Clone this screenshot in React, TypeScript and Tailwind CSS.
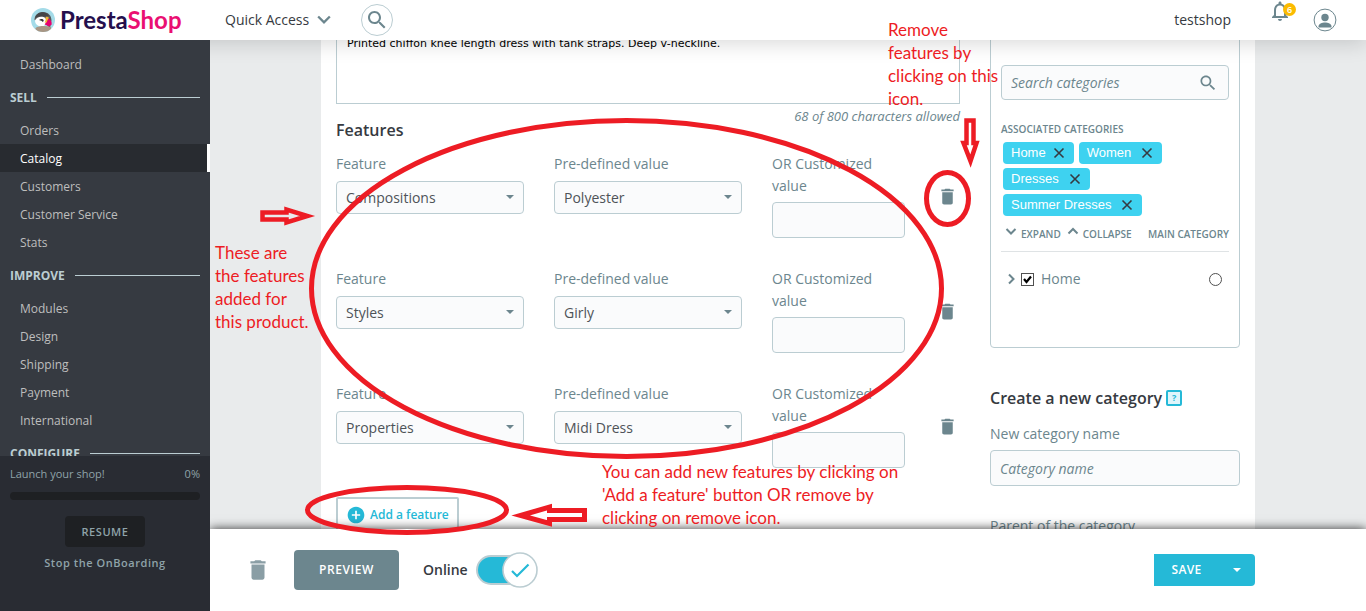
import { useState } from 'react'
import type { ReactNode } from 'react'

type MenuGroup = { title?: string; items: string[] }

const menu: MenuGroup[] = [
  { items: ['Dashboard'] },
  { title: 'Sell', items: ['Orders', 'Catalog', 'Customers', 'Customer Service', 'Stats'] },
  { title: 'Improve', items: ['Modules', 'Design', 'Shipping', 'Payment', 'International'] },
  { title: 'Configure', items: [] },
]

const initialFeatures = [
  { id: 1, feature: 'Compositions', value: 'Polyester', custom: '' },
  { id: 2, feature: 'Styles', value: 'Girly', custom: '' },
  { id: 3, feature: 'Properties', value: 'Midi Dress', custom: '' },
]

const featureNames = ['Compositions', 'Styles', 'Properties']
const featureValues = ['Polyester', 'Girly', 'Midi Dress']
const initialTags = ['Home', 'Women', 'Dresses', 'Summer Dresses']

const fieldClass = 'border border-[#bbcdd2] rounded bg-[#fafbfc] text-sm focus:outline-none focus:border-[#25b9d7]'

function TrashIcon({ className }: { className: string }) {
  return (
    <svg viewBox="0 0 24 24" fill="currentColor" className={className}>
      <path d="M6 19c0 1.1.9 2 2 2h8c1.1 0 2-.9 2-2V7H6v12zM19 4h-3.5l-1-1h-5l-1 1H5v2h14V4z" />
    </svg>
  )
}

function SearchIcon({ className }: { className: string }) {
  return (
    <svg viewBox="0 0 24 24" fill="currentColor" className={className}>
      <path d="M15.5 14h-.79l-.28-.27C15.41 12.59 16 11.11 16 9.5 16 5.91 13.09 3 9.5 3S3 5.91 3 9.5 5.91 16 9.5 16c1.61 0 3.09-.59 4.23-1.57l.27.28v.79l5 4.99L20.49 19l-4.99-5zm-6 0C7.01 14 5 11.99 5 9.5S7.01 5 9.5 5 14 7.01 14 9.5 11.99 14 9.5 14z" />
    </svg>
  )
}

function Chevron({ d, className }: { d: string; className: string }) {
  return (
    <svg viewBox="0 0 12 12" fill="none" stroke="currentColor" strokeWidth="2" className={className}>
      <path d={d} />
    </svg>
  )
}

function Logo() {
  return (
    <a href="#home" className="flex items-center gap-[5px] ml-[31px] w-[194px] shrink-0">
      <svg viewBox="0 0 24 24" className="size-6">
        <defs>
          <clipPath id="puffin">
            <circle cx="12" cy="12" r="12" />
          </clipPath>
        </defs>
        <g clipPath="url(#puffin)">
          <rect width="24" height="24" fill="#a4dbe8" />
          <path d="M3.500 12C3.500 7 7 4 12 4s8.500 3.500 8.500 8.500L19 20l-3-3z" fill="#58585a" />
          <path d="M4 10C6 3.500 14 2 18 7.500l-3.500 1.200C11 7.700 7.500 8 4 10z" fill="#454547" />
          <path d="M4 12.500c1-3 4.300-4.200 7.300-3.800 3 .4 4.700 2.600 4.200 5.300-.5 2.600-2.400 4.500-5 4.500-3.600 0-6.500-2.500-6.500-6z" fill="#fff" />
          <path d="M4.500 20C8 17.500 15 17.500 20 19v5H4.500z" fill="#a89684" />
          <path d="M17 10.500c2.500.8 4 3 3.700 6L18 18.500l-4.500-2.200c2-1.500 3-3.300 3.500-5.800z" fill="#e6006f" />
          <path d="M14.500 9c1.500-.6 2.700-.2 3.400.8l-2.600 5-1.800-.3c1.200-1.800 1.500-3.500 1-5.500z" fill="#f6b133" />
          <path d="M8 12c1.800-1.400 3.800-1.200 4.800.3l-.8 1.800c-1-1-2-1.600-4-2.100z" fill="#333" />
        </g>
      </svg>
      <span className="font-['Lato'] text-2xl leading-6 font-bold text-[#250f4d]">
        Presta<span className="text-[#ea0f72]">Shop</span>
      </span>
    </a>
  )
}

function Header() {
  return (
    <header className="relative z-20 flex h-10 shrink-0 items-center bg-white text-sm text-[#363a41] shadow-[0_4px_20px_rgba(0,0,0,0.15)]">
      <Logo />
      <button type="button" className="flex items-center gap-2">
        Quick Access
        <Chevron d="M1 3l5 5 5-5" className="size-3.5 text-[#6c868e]" />
      </button>
      <button type="button" aria-label="Search" className="ml-[30px] flex size-8 items-center justify-center rounded-full border border-[#bbcdd2] text-[#6c868e]">
        <SearchIcon className="size-6" />
      </button>
      <a href="#shop" className="ml-auto">testshop</a>
      <button type="button" aria-label="Notifications" className="relative ml-[37px] mb-[18px] text-[#6c868e]">
        <svg viewBox="0 0 24 24" fill="currentColor" className="size-6">
          <path d="M12 22c1.100 0 2-.9 2-2h-4c0 1.100.9 2 2 2zm6-6v-5c0-3.070-1.630-5.640-4.500-6.320V4c0-.83-.67-1.500-1.500-1.500s-1.500.67-1.500 1.500v.68C7.640 5.360 6 7.920 6 11v5l-2 2v1h16v-1l-2-2zm-2 1H8v-6c0-2.480 1.510-4.500 4-4.500s4 2.020 4 4.500v6z" />
        </svg>
        <span className="absolute left-[15px] top-1 flex size-[13px] items-center justify-center rounded-full bg-[#fbbb00] text-[9px] leading-3 font-semibold text-white">6</span>
      </button>
      <button type="button" aria-label="Account" className="ml-[21px] mr-[29px] text-[#6c868e]">
        <svg viewBox="0 0 24 24" fill="none" className="size-6">
          <circle cx="12" cy="12" r="10.900" stroke="currentColor" />
          <circle cx="12" cy="9.500" r="3.700" fill="currentColor" />
          <path d="M5.500 18.500c0-2.800 3.500-4 6.500-4s6.500 1.200 6.500 4v1h-13z" fill="currentColor" />
        </svg>
      </button>
    </header>
  )
}

function Sidebar() {
  const active = 'Catalog'
  return (
    <aside className="relative z-20 flex w-[210px] shrink-0 flex-col bg-[#363a41] text-xs">
      <nav className="min-h-0 flex-1 overflow-hidden pt-2.5">
        {menu.map(group => (
          <div key={group.title ?? 'top'}>
            {group.title && (
              <h3 className="flex h-[38px] items-center gap-2.5 px-2.5 font-bold uppercase text-[#bbcdd2]">
                <span className="pt-px">{group.title}</span>
                <span className="h-px flex-1 bg-[#bbcdd2]" />
              </h3>
            )}
            {group.items.map(item => (
              <a
                key={item}
                href={`#${item}`}
                className={`flex h-7 items-center px-5 pt-0.5 ${
                  item === active ? 'bg-[#282b30] text-white border-r-3 border-white' : 'text-[#bebebe] hover:text-white'
                }`}
              >
                {item}
              </a>
            ))}
          </div>
        ))}
      </nav>
      <div className="flex h-[155px] shrink-0 flex-col items-center bg-[#292c33] px-2.5 pt-2.5 text-[11px] leading-4 text-[#8fa3a9]">
        <div className="flex w-full justify-between">
          <span>Launch your shop!</span>
          <span>0%</span>
        </div>
        <div className="mt-2.5 h-2 w-full rounded-full bg-[#1e2023]" />
        <button type="button" className="mt-4 h-[31px] w-20 rounded-sm bg-[#1e2023] font-semibold tracking-wider uppercase">
          Resume
        </button>
        <button type="button" className="mt-2 font-semibold tracking-wider">Stop the OnBoarding</button>
      </div>
    </aside>
  )
}

type SelectProps = { label: string; value: string; options: string[]; onChange: (value: string) => void }

function SelectField({ label, value, options, onChange }: SelectProps) {
  return (
    <label className="flex flex-col gap-1.5">
      {label}
      <span className="relative">
        <select
          value={value}
          onChange={e => onChange(e.target.value)}
          className={`${fieldClass} block h-[33px] w-full appearance-none px-[9px] pt-px text-[#4e5358]`}
        >
          {options.map(o => <option key={o}>{o}</option>)}
        </select>
        <svg viewBox="0 0 8 4" fill="#6c868e" className="pointer-events-none absolute right-2.5 top-3.5 h-1 w-2">
          <path d="M0 0h8L4 4z" />
        </svg>
      </span>
    </label>
  )
}

function Features() {
  const [features, setFeatures] = useState(initialFeatures)

  const update = (id: number, patch: object) =>
    setFeatures(features.map(f => (f.id === id ? { ...f, ...patch } : f)))

  const add = () =>
    setFeatures([...features, { id: Date.now(), feature: featureNames[0], value: featureValues[0], custom: '' }])

  return (
    <section>
      <h2 className="mb-[15px] text-base leading-4 font-semibold text-[#363a41]">Features</h2>
      {features.map(f => (
        <div key={f.id} className="grid h-[115px] grid-cols-[188fr_188fr_133fr_25px] items-start gap-[30px] leading-[22px]">
          <SelectField label="Feature" value={f.feature} options={featureNames} onChange={feature => update(f.id, { feature })} />
          <SelectField label="Pre-defined value" value={f.value} options={featureValues} onChange={value => update(f.id, { value })} />
          <label className="flex flex-col gap-[5px]">
            OR Customized value
            <input
              type="text"
              value={f.custom}
              onChange={e => update(f.id, { custom: e.target.value })}
              className={`${fieldClass} h-9 w-full px-2.5`}
            />
          </label>
          <button
            type="button"
            aria-label="Remove feature"
            onClick={() => setFeatures(features.filter(x => x.id !== f.id))}
            className="mt-[33px] flex justify-center"
          >
            <TrashIcon className="size-[21px]" />
          </button>
        </div>
      ))}
      <button type="button" onClick={add} className="-mt-px flex h-9 items-center gap-1 rounded-xs border-2 border-[#bbcdd2] px-2 text-xs font-semibold text-[#25b9d7]">
        <svg viewBox="0 0 24 24" fill="currentColor" className="size-5">
          <path d="M12 2C6.480 2 2 6.480 2 12s4.480 10 10 10 10-4.480 10-10S17.520 2 12 2zm5 11h-4v4h-2v-4H7v-2h4V7h2v4h4v2z" />
        </svg>
        Add a feature
      </button>
    </section>
  )
}

function Categories() {
  const [tags, setTags] = useState(initialTags)

  return (
    <div className="h-[328px] rounded border border-[#bbcdd2] px-2.5 pt-11">
      <div className="relative">
        <input
          type="search"
          aria-label="Search categories"
          placeholder="Search categories"
          className={`${fieldClass} block h-[35px] w-full px-[9px] placeholder:text-[#6c868e] placeholder:italic`}
        />
        <SearchIcon className="absolute right-[11px] top-2 size-5" />
      </div>
      <h4 className="mt-[21px] text-[10px] leading-4 font-semibold uppercase">Associated categories</h4>
      <ul className="mt-[5px] ml-0.5 flex flex-wrap gap-x-[5px] gap-y-1 font-['Liberation_Sans'] text-[13px] text-white">
        {tags.map(tag => (
          <li key={tag} className="flex h-[22px] items-center gap-2 rounded bg-[#3ed2f0] pr-[7px] pl-2 first:gap-[5px]">
            {tag}
            <button type="button" aria-label={`Remove ${tag}`} onClick={() => setTags(tags.filter(t => t !== tag))} className="text-[#363a41]">
              <svg viewBox="0 0 16 16" fill="none" stroke="currentColor" strokeWidth="1.600" className="size-4">
                <path d="M3.500 3.500l9 9M12.500 3.500l-9 9" />
              </svg>
            </button>
          </li>
        ))}
      </ul>
      <div className="mt-2.5 flex items-center border-b border-[#dfe3e5] pb-[9px] text-[10px] leading-4 font-semibold uppercase">
        <button type="button" className="ml-1 flex gap-1 uppercase">
          <Chevron d="M1.500 3l4.500 4.500L10.500 3" className="size-3" />
          Expand
        </button>
        <button type="button" className="ml-1.5 flex gap-1 uppercase">
          <Chevron d="M1.500 7.500L6 3l4.500 4.500" className="size-3" />
          Collapse
        </button>
        <span className="ml-auto">Main category</span>
      </div>
      <div className="mt-[15px] flex items-center pr-[7px] pl-1 leading-6">
        <button type="button" aria-label="Expand Home">
          <Chevron d="M4 1.500L8.500 6 4 10.500" className="size-3" />
        </button>
        <label className="ml-1 flex items-center gap-[7px]">
          <span className="relative size-[13px]">
            <input type="checkbox" defaultChecked className="peer block size-[13px] appearance-none border border-[#505050] bg-white" />
            <svg viewBox="0 0 13 13" fill="none" stroke="#000" strokeWidth="2.200" className="pointer-events-none absolute inset-0 hidden size-[13px] peer-checked:block">
              <path d="M3 6l2.500 3L10 3.500" />
            </svg>
          </span>
          Home
        </label>
        <input
          type="radio"
          aria-label="Home is the main category"
          className="ml-auto block size-[13px] appearance-none rounded-full border border-[#505050] bg-white checked:border-4"
        />
      </div>
    </div>
  )
}

function ProductForm() {
  return (
    <div className="mx-auto grid w-full max-w-[934px] grid-cols-[minmax(0,1fr)_250px] gap-[30px] bg-white px-[15px] text-sm text-[#6c868e]">
      <div className="-mt-5">
        <textarea
          aria-label="Summary"
          className="block h-[84px] w-full resize-none overflow-hidden border border-[#bbcdd2] px-2.5 pt-4 font-['DejaVu_Sans'] text-[11px] leading-[14px] text-black focus:outline-none"
          defaultValue="Printed chiffon knee length dress with tank straps. Deep v-neckline."
        />
        <p className="mt-1.5 text-right text-[13px] leading-3 italic">68 of 800 characters allowed</p>
        <Features />
      </div>
      <div className="-mt-5">
        <Categories />
        <h2 className="mt-[38px] flex items-center gap-1 text-base leading-6 font-semibold text-[#363a41]">
          Create a new category
          <button type="button" aria-label="Help" className="flex size-4 items-center justify-center rounded-xs border-2 border-[#25b9d7] bg-[#dff5fb] text-[9px] leading-3 font-bold text-[#25b9d7]">?</button>
        </h2>
        <label className="mt-3 flex flex-col gap-1 leading-6">
          New category name
          <input type="text" placeholder="Category name" className={`${fieldClass} h-9 w-full px-[9px] placeholder:text-[#6c868e] placeholder:italic`} />
        </label>
        <p className="mt-7 leading-6">Parent of the category</p>
      </div>
    </div>
  )
}

function Footer() {
  const [online, setOnline] = useState(true)

  return (
    <footer className="relative z-10 flex h-[82px] shrink-0 items-center bg-white pr-[111px] pl-[35px] text-sm text-[#363a41] shadow-[0_0_10px_rgba(0,0,0,0.8)]">
      <button type="button" aria-label="Delete product" className="text-[#8a9ea5]">
        <TrashIcon className="size-[26px]" />
      </button>
      <button type="button" className="ml-[23px] h-10 w-[105px] rounded-sm bg-[#6c868e] text-xs font-semibold tracking-wider text-white uppercase">
        Preview
      </button>
      <label className="ml-6 flex items-center gap-2 font-semibold">
        Online
        <span className="relative flex h-9 w-[62px] items-center">
          <input
            type="checkbox"
            checked={online}
            onChange={e => setOnline(e.target.checked)}
            className="h-[30px] w-14 appearance-none rounded-full border-2 border-[#bbcdd2] bg-white checked:bg-[#25b9d7]"
          />
          <svg viewBox="0 0 36 36" fill="none" className="pointer-events-none absolute right-0 size-9">
            <circle cx="18" cy="18" r="17" fill="#fff" stroke="#bbcdd2" strokeWidth="1.600" />
            {online && <path d="M10 19l5 5L26.500 12.500" stroke="#25b9d7" strokeWidth="2.200" />}
          </svg>
        </span>
      </label>
      <div className="ml-auto flex h-8 overflow-hidden rounded-r-sm bg-[#25b9d7] text-xs font-semibold text-white">
        <button type="button" className="w-[65px] tracking-wide uppercase">Save</button>
        <button type="button" aria-label="More save options" className="flex w-9 items-center justify-center">
          <svg viewBox="0 0 8 4" fill="currentColor" className="h-1 w-2">
            <path d="M0 0h8L4 4z" />
          </svg>
        </button>
      </div>
    </footer>
  )
}

function Note({ className, children }: { className: string; children: ReactNode }) {
  return <p className={`absolute font-['Lato'] text-[17px] leading-[23px] whitespace-pre text-[#ed1c24] ${className}`}>{children}</p>
}

// Tutorial notes drawn on top of the page
function Annotations() {
  return (
    <div className="pointer-events-none absolute inset-0 z-30 overflow-hidden">
      <svg width="1366" height="611" fill="none" stroke="#ed1c24" strokeWidth="5">
        <ellipse cx="626.500" cy="288.500" rx="315" ry="168" />
        <ellipse cx="407" cy="510" rx="99.500" ry="22.500" />
        <ellipse cx="947.500" cy="198.500" rx="21" ry="26" />
        <path d="M262.500 212.500h24V209.500l21 6.500-21 6.500v-3h-24z" strokeWidth="4.500" />
        <path d="M966.500 120.500h7v22.500h3l-6 18-7-18h3z" strokeWidth="4.500" />
        <path d="M584.500 510.500v9h-35v4L520.500 515.500l29-8.500v3.500z" />
      </svg>
      <Note className="left-[888px] top-[18px]">{'Remove\nfeatures by\nclicking on this\nicon.'}</Note>
      <Note className="left-[215px] top-[241px]">{'These are\nthe features\nadded for\nthis product.'}</Note>
      <Note className="left-[602px] top-[460px]">{"You can add new features by clicking on\n'Add a feature' button OR remove by\nclicking on remove icon."}</Note>
    </div>
  )
}

export default function App() {
  return (
    <div className="relative flex h-screen flex-col overflow-hidden font-['Open_Sans',sans-serif]">
      <Header />
      <div className="flex min-h-0 flex-1">
        <Sidebar />
        <main className="flex min-w-0 flex-1 flex-col bg-[#e9ebec]">
          <div className="flex min-h-0 flex-1 overflow-hidden">
            <ProductForm />
          </div>
          <Footer />
        </main>
      </div>
      <Annotations />
    </div>
  )
}
